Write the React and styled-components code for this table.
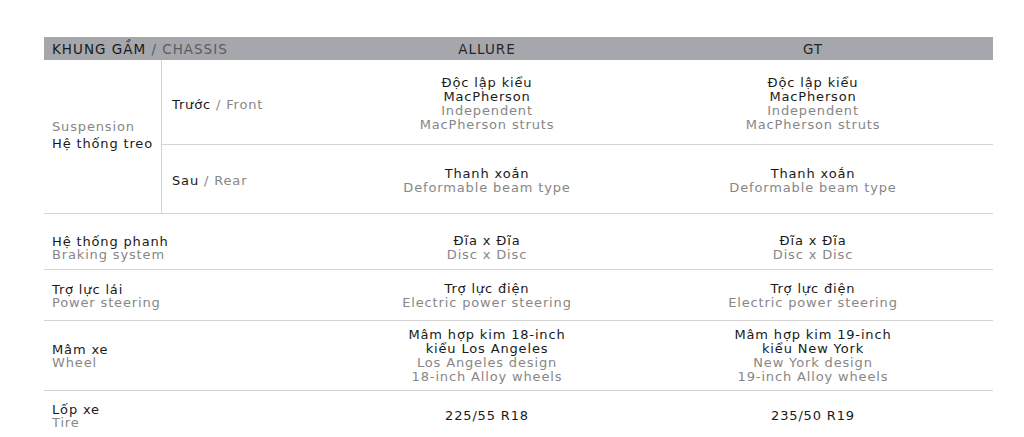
import React from "react";
import styled, { createGlobalStyle } from "styled-components";

const Global = createGlobalStyle`
  html, body { margin: 0; padding: 0; background: #ffffff; }
  body { font-family: "DejaVu Sans", "Noto Sans", sans-serif; }
`;

const Page = styled.div`
  padding: 37px 0 0 44px;
  width: 949px;
`;

const Table = styled.div`
  display: flex;
  flex-direction: column;
  font-size: 13px;
  letter-spacing: 0.85px;
`;

const cols = "280px 326px 326px 1fr";

const HeaderRow = styled.div`
  display: grid;
  grid-template-columns: ${cols};
  height: 23px;
  align-items: center;
  background: #a6a7ac;
  text-transform: uppercase;
  font-size: 13.5px;
  letter-spacing: 1px;
`;

const HeaderTitle = styled.div`
  padding-left: 8px;
  color: #1a1a1a;
  white-space: nowrap;
`;

const HeaderSub = styled.span`
  color: #5a5c61;
`;

const HeaderCell = styled.div`
  text-align: center;
  color: #262626;
`;

const Group = styled.div`
  display: grid;
  grid-template-columns: 117px 1fr;
`;

const GroupLabel = styled.div`
  display: flex;
  flex-direction: column;
  justify-content: center;
  gap: 4px;
  padding-left: 8px;
  padding-bottom: 4px;
  line-height: 13px;
`;

const SubRows = styled.div`
  display: flex;
  flex-direction: column;
  border-left: 1px solid #d4d4d4;
`;

const SubRow = styled.div`
  display: grid;
  grid-template-columns: 162px 326px 326px 1fr;
  align-items: center;
  box-sizing: border-box;
  height: ${(p) => p.$h}px;
  padding-top: ${(p) => p.$pt || 0}px;
  border-top: ${(p) => (p.$line ? "1px solid #d4d4d4" : "none")};
`;

const SubLabel = styled.div`
  padding-left: 10px;
  color: #1a1a1a;
  white-space: nowrap;
`;

const Row = styled.div`
  display: grid;
  grid-template-columns: ${cols};
  align-items: center;
  box-sizing: border-box;
  height: ${(p) => p.$h}px;
  padding-top: ${(p) => p.$pt || 0}px;
  border-top: 1px solid #d4d4d4;
`;

const Label = styled.div`
  padding-left: 8px;
  display: flex;
  flex-direction: column;
  line-height: 13px;
  white-space: nowrap;
`;

const Value = styled.div`
  display: flex;
  flex-direction: column;
  align-items: center;
  text-align: center;
  line-height: 14px;
  white-space: nowrap;
`;

const Dark = styled.span`
  color: #1a1a1a;
`;

const Gray = styled.span`
  color: #878787;
`;

const Cell = ({ vi, en }) => (
  <Value>
    {vi.map((t, i) => (
      <Dark key={"v" + i}>{t}</Dark>
    ))}
    {en.map((t, i) => (
      <Gray key={"e" + i}>{t}</Gray>
    ))}
  </Value>
);

const rows = [
  {
    h: 56,
    pt: 12,
    vi: "Hệ thống phanh",
    en: "Braking system",
    a: { vi: ["Đĩa x Đĩa"], en: ["Disc x Disc"] },
    g: { vi: ["Đĩa x Đĩa"], en: ["Disc x Disc"] },
  },
  {
    h: 51,
    pt: 1,
    vi: "Trợ lực lái",
    en: "Power steering",
    a: { vi: ["Trợ lực điện"], en: ["Electric power steering"] },
    g: { vi: ["Trợ lực điện"], en: ["Electric power steering"] },
  },
  {
    h: 70,
    pt: 0,
    vi: "Mâm xe",
    en: "Wheel",
    a: {
      vi: ["Mâm hợp kim 18-inch", "kiểu Los Angeles"],
      en: ["Los Angeles design", "18-inch Alloy wheels"],
    },
    g: {
      vi: ["Mâm hợp kim 19-inch", "kiểu New York"],
      en: ["New York design", "19-inch Alloy wheels"],
    },
  },
  {
    h: 50,
    pt: 0,
    vi: "Lốp xe",
    en: "Tire",
    a: { vi: ["225/55 R18"], en: [] },
    g: { vi: ["235/50 R19"], en: [] },
  },
];

export default function App() {
  return (
    <>
      <Global />
      <Page>
        <Table>
          <HeaderRow>
            <HeaderTitle>
              KHUNG GẦM <HeaderSub>/ CHASSIS</HeaderSub>
            </HeaderTitle>
            <HeaderCell>ALLURE</HeaderCell>
            <HeaderCell>GT</HeaderCell>
          </HeaderRow>

          <Group>
            <GroupLabel>
              <Gray>Suspension</Gray>
              <Dark>Hệ thống treo</Dark>
            </GroupLabel>
            <SubRows>
              <SubRow $h={84} $pt={4}>
                <SubLabel>
                  Trước <Gray>/ Front</Gray>
                </SubLabel>
                <Cell
                  vi={["Độc lập kiểu", "MacPherson"]}
                  en={["Independent", "MacPherson struts"]}
                />
                <Cell
                  vi={["Độc lập kiểu", "MacPherson"]}
                  en={["Independent", "MacPherson struts"]}
                />
              </SubRow>
              <SubRow $h={69} $pt={3} $line>
                <SubLabel>
                  Sau <Gray>/ Rear</Gray>
                </SubLabel>
                <Cell vi={["Thanh xoắn"]} en={["Deformable beam type"]} />
                <Cell vi={["Thanh xoắn"]} en={["Deformable beam type"]} />
              </SubRow>
            </SubRows>
          </Group>

          {rows.map((r) => (
            <Row key={r.vi} $h={r.h} $pt={r.pt}>
              <Label>
                <Dark>{r.vi}</Dark>
                <Gray>{r.en}</Gray>
              </Label>
              <Cell vi={r.a.vi} en={r.a.en} />
              <Cell vi={r.g.vi} en={r.g.en} />
            </Row>
          ))}
        </Table>
      </Page>
    </>
  );
}
